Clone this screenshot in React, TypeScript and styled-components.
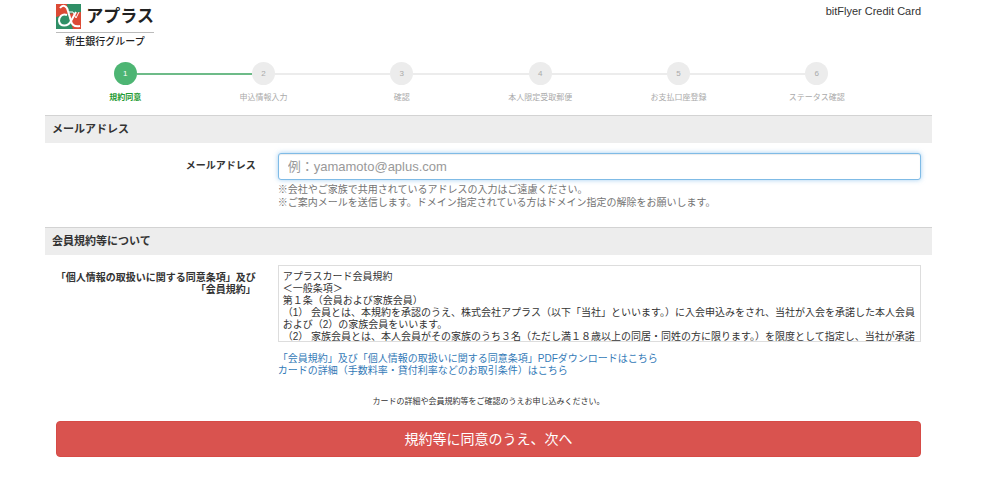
import React from "react";
import styled, { createGlobalStyle, css } from "styled-components";

const GlobalStyle = createGlobalStyle`
  *, *::before, *::after { box-sizing: border-box; }
  body {
    margin: 0;
    background: #fff;
    color: #333;
    font-family: "Liberation Sans", "Noto Sans CJK JP", sans-serif;
    font-size: 10px;
    line-height: 12px;
  }
  button, input, textarea { font-family: inherit; }
`;

const Page = styled.div`
  padding: 4px 68px 20px 45px;
`;

const Header = styled.header`
  display: flex;
  justify-content: space-between;
  align-items: flex-start;
  height: 58px;
  padding: 0 11px;
`;

const Brand = styled.div`
  width: 98px;
  color: #222;
`;

const BrandTop = styled.div`
  display: flex;
  align-items: center;
  justify-content: space-between;
  height: 29px;
  padding-bottom: 3px;
  border-bottom: 1px solid #bbb;
  font-size: 17px;
  font-weight: 700;
  line-height: 24px;
`;

const BrandGroup = styled.div`
  padding-top: 2px;
  font-size: 10px;
  font-weight: 500;
  line-height: 14px;
  text-align: center;
`;

const Product = styled.div`
  font-size: 11px;
  line-height: 14px;
`;

const Steps = styled.ol`
  display: grid;
  grid-template-columns: repeat(6, 1fr);
  margin: 0 46px 0 11px;
  padding: 0 0 11px;
  list-style: none;
`;

const Step = styled.li<{ $active?: boolean }>`
  display: flex;
  flex-direction: column;
  align-items: center;
  gap: 7px;
  color: #aaa;
  font-size: 8px;
  line-height: 12px;
  ${(p) => p.$active && css`
    color: #1f9a32;
    font-weight: 700;
  `}
`;

const Track = styled.div`
  display: grid;
  grid-template-columns: 1fr 23px 1fr;
  align-items: center;
  width: 100%;
`;

const Line = styled.span<{ $color: string }>`
  height: 2px;
  background: ${(p) => p.$color};
`;

const Dot = styled.span<{ $active?: boolean }>`
  height: 23px;
  border-radius: 50%;
  background: ${(p) => (p.$active ? "#4db573" : "#ececec")};
  color: ${(p) => (p.$active ? "#fff" : "#aaa")};
  font-weight: 400;
  line-height: 23px;
  text-align: center;
`;

const SectionTitle = styled.h2`
  margin: 0;
  padding: 0 7px;
  border-top: 1px solid #d3d3d3;
  background: #ededed;
  font-size: 11px;
  font-weight: 700;
  line-height: 27px;
`;

const Field = styled.div`
  display: grid;
  grid-template-columns: 3fr 9fr;
  padding: 10px 0 18px;
`;

const Label = styled.label`
  padding: 7px 11px 0 0;
  font-weight: 700;
  text-align: right;
`;

const Control = styled.div`
  padding: 0 11px;
`;

const EmailInput = styled.input`
  display: block;
  width: 100%;
  height: 27px;
  padding: 0 9px;
  border: 1px solid #7fbbe6;
  border-radius: 3px;
  outline: 0;
  box-shadow: inset 0 1px 1px rgba(0, 0, 0, 0.08), 0 0 5px rgba(102, 175, 233, 0.6);
  color: #555;
  font-size: 13px;
  &::placeholder { color: #999; }
`;

const Help = styled.p`
  margin: 3px 0 0;
  color: #737373;
  line-height: 13px;
`;

const Terms = styled.textarea`
  display: block;
  width: 100%;
  height: 77px;
  padding: 5px 4px 0;
  border: 1px solid #ddd;
  color: #333;
  font-size: 10px;
  line-height: 12px;
  white-space: pre;
  overflow: hidden;
  resize: none;
`;

const Links = styled.div`
  display: flex;
  flex-direction: column;
  align-items: flex-start;
  padding-top: 11px;
`;

const TextLink = styled.a`
  color: #337ab7;
  text-decoration: none;
`;

const Footer = styled.div`
  padding: 0 11px;
  text-align: center;
`;

const Caption = styled.p`
  margin: 0 0 12px;
  font-size: 8px;
  line-height: 14px;
`;

const Submit = styled.button`
  display: block;
  width: 100%;
  height: 36px;
  padding: 0 0 2px;
  border: 1px solid #d64b46;
  border-radius: 4px;
  background: #d9534f;
  color: #fff;
  font-size: 14px;
`;

const steps = ["規約同意", "申込情報入力", "確認", "本人限定受取郵便", "お支払口座登録", "ステータス確認"];

const lineColor = (segment: number) => {
  if (segment < 0 || segment >= steps.length - 1) return "transparent";
  return segment === 0 ? "#6dbb88" : "#ececec";
};

const termsText = `アプラスカード会員規約
＜一般条項＞
第１条（会員および家族会員）
（1） 会員とは、本規約を承認のうえ、株式会社アプラス（以下「当社」といいます。）に入会申込みをされ、当社が入会を承諾した本人会員
および（2）の家族会員をいいます。
（2） 家族会員とは、本人会員がその家族のうち３名（ただし満１８歳以上の同居・同姓の方に限ります。）を限度として指定し、当社が承諾`;

function LogoMark() {
  return (
    <svg width="25" height="25" viewBox="0 0 25 25" aria-hidden="true">
      <path d="M0 0H25V25H0Z" fill="#2f8f66" />
      <path d="M12 10L25 8V25H17Z" fill="#dc4a35" />
      <path d="M0 13V0H11L12 10Z" fill="#dc4a35" />
      <path d="M4 4C7 0 11 2 12 7L15 17C16 21 19 23 24 22" fill="none" stroke="#fff" strokeWidth="2" />
      <path d="M11 11C6 9 3 13 3 17C4 23 12 23 15 17L20 8" fill="none" stroke="#fff" strokeWidth="2" />
      <path d="M13 8H17L20 14L23 8" fill="none" stroke="#fff" strokeWidth="1" />
    </svg>
  );
}

export default function App() {
  return (
    <>
      <GlobalStyle />
      <Page>
        <Header>
          <Brand>
            <BrandTop>
              <LogoMark />
              <span>アプラス</span>
            </BrandTop>
            <BrandGroup>新生銀行グループ</BrandGroup>
          </Brand>
          <Product>bitFlyer Credit Card</Product>
        </Header>
        <Steps>
          {steps.map((name, i) => (
            <Step key={name} $active={i === 0} aria-current={i === 0 ? "step" : undefined}>
              <Track>
                <Line $color={lineColor(i - 1)} />
                <Dot $active={i === 0}>{i + 1}</Dot>
                <Line $color={lineColor(i)} />
              </Track>
              <span>{name}</span>
            </Step>
          ))}
        </Steps>
        <form onSubmit={(e) => e.preventDefault()}>
          <SectionTitle>メールアドレス</SectionTitle>
          <Field>
            <Label htmlFor="email">メールアドレス</Label>
            <Control>
              <EmailInput id="email" type="email" placeholder="例：yamamoto@aplus.com" />
              <Help>
                ※会社やご家族で共用されているアドレスの入力はご遠慮ください。
                <br />
                ※ご案内メールを送信します。ドメイン指定されている方はドメイン指定の解除をお願いします。
              </Help>
            </Control>
          </Field>
          <SectionTitle>会員規約等について</SectionTitle>
          <Field>
            <Label htmlFor="terms">
              「個人情報の取扱いに関する同意条項」及び
              <br />
              「会員規約」
            </Label>
            <Control>
              <Terms id="terms" readOnly value={termsText} />
              <Links>
                <TextLink href="#pdf">「会員規約」及び「個人情報の取扱いに関する同意条項」PDFダウンロードはこちら</TextLink>
                <TextLink href="#detail">カードの詳細（手数料率・貸付利率などのお取引条件）はこちら</TextLink>
              </Links>
            </Control>
          </Field>
          <Footer>
            <Caption>カードの詳細や会員規約等をご確認のうえお申し込みください。</Caption>
            <Submit type="submit">規約等に同意のうえ、次へ</Submit>
          </Footer>
        </form>
      </Page>
    </>
  );
}
